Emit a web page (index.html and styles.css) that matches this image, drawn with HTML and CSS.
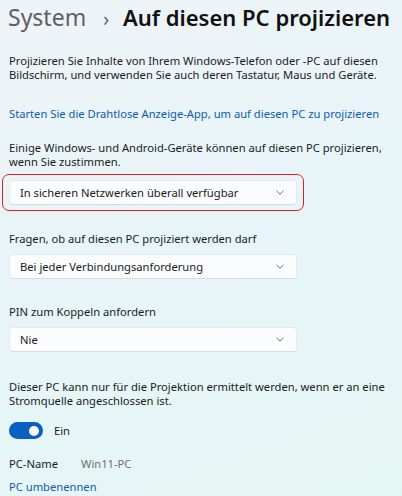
FILE: index.html
```html
<!DOCTYPE html>
<html lang="de">
<head>
    <meta charset="UTF-8">
    <meta name="viewport" content="width=device-width, initial-scale=1.0">
    <title>Auf diesen PC projizieren</title>
    <link rel="stylesheet" href="styles.css">
</head>
<body>
    <header class="page-title">
        <span class="crumb">System</span>
        <span class="sep">&#8250;</span>
        <span class="current">Auf diesen PC projizieren</span>
    </header>

    <main class="settings">
        <p class="intro">Projizieren Sie Inhalte von Ihrem Windows-Telefon oder -PC auf diesen Bildschirm, und verwenden Sie auch deren Tastatur, Maus und Geräte.</p>

        <a class="link launch" href="#">Starten Sie die Drahtlose Anzeige-App, um auf diesen PC zu projizieren</a>

        <p class="label first">Einige Windows- und Android-Geräte können auf diesen PC projizieren, wenn Sie zustimmen.</p>
        <div class="highlight">
            <div class="dropdown">
                <span>In sicheren Netzwerken überall verfügbar</span>
                <svg class="chevron" width="8" height="5" viewBox="0 0 8 5"><path d="M0.5 0.8 L4 4.2 L7.5 0.8" fill="none" stroke="#6b6f72" stroke-width="1"/></svg>
            </div>
        </div>

        <p class="label ask">Fragen, ob auf diesen PC projiziert werden darf</p>
        <div class="dropdown">
            <span>Bei jeder Verbindungsanforderung</span>
            <svg class="chevron" width="8" height="5" viewBox="0 0 8 5"><path d="M0.5 0.8 L4 4.2 L7.5 0.8" fill="none" stroke="#6b6f72" stroke-width="1"/></svg>
        </div>

        <p class="label pin">PIN zum Koppeln anfordern</p>
        <div class="dropdown">
            <span>Nie</span>
            <svg class="chevron" width="8" height="5" viewBox="0 0 8 5"><path d="M0.5 0.8 L4 4.2 L7.5 0.8" fill="none" stroke="#6b6f72" stroke-width="1"/></svg>
        </div>

        <p class="label power">Dieser PC kann nur für die Projektion ermittelt werden, wenn er an eine Stromquelle angeschlossen ist.</p>
        <div class="toggle-row">
            <span class="toggle on"><span class="knob"></span></span>
            <span class="toggle-text">Ein</span>
        </div>

        <div class="pc-name">
            <span class="key">PC-Name</span>
            <span class="value">Win11-PC</span>
        </div>
        <a class="link rename" href="#">PC umbenennen</a>
    </main>
</body>
</html>
```

FILE: styles.css
```css
body {
    font-family: "Noto Sans", "Liberation Sans", sans-serif;
    margin: 0;
    padding: 0;
    color: #1b1b1b;
    background: linear-gradient(160deg, #eef3f7 0%, #e7f5f8 50%, #e4f6f4 100%);
    height: 496px;
    overflow: hidden;
}

.page-title {
    display: flex;
    align-items: baseline;
    padding: 0 0 0 8px;
    height: 36px;
    font-size: 23px;
    line-height: 34px;
    white-space: nowrap;
}

.crumb {
    color: #5d6165;
}

.sep {
    color: #5d6165;
    font-size: 19px;
    margin: 0 14px 0 17px;
}

.current {
    font-size: 22px;
    font-weight: 600;
    color: #111;
}

.settings {
    padding: 0 4px 0 9px;
    font-size: 11.2px;
    line-height: 14px;
}

.settings p {
    margin: 0;
}

.intro {
    margin-top: 18px !important;
}

.link {
    display: block;
    color: #0f5bb0;
    text-decoration: none;
}

.launch {
    margin-top: 25px;
}

.label.first {
    margin-top: 20px;
}

.highlight {
    margin: 5px 0 0 -7px;
    width: 288px;
    padding: 5px 6px;
    border: 1px solid #e41f26;
    border-radius: 7px;
}

.dropdown {
    display: flex;
    align-items: center;
    justify-content: space-between;
    box-sizing: border-box;
    width: 288px;
    height: 25px;
    padding: 0 12px 0 10px;
    background-color: #fafcfd;
    border: 1px solid #e4e9ec;
    border-bottom-color: #d6dbde;
    border-radius: 4px;
}

.label.ask {
    margin-top: 21px;
    margin-bottom: 8px;
}

.label.pin {
    margin-top: 26px;
    margin-bottom: 8px;
}

.label.power {
    margin-top: 28px;
}

.toggle-row {
    display: flex;
    align-items: center;
    margin-top: 14px;
    height: 17px;
}

.toggle {
    display: flex;
    align-items: center;
    justify-content: flex-end;
    box-sizing: border-box;
    width: 34px;
    height: 17px;
    padding: 0 4px;
    border-radius: 9px;
    background-color: #0a5fc1;
}

.knob {
    width: 10px;
    height: 10px;
    border-radius: 50%;
    background-color: #fff;
}

.toggle-text {
    margin-left: 11px;
}

.pc-name {
    display: flex;
    margin-top: 18px;
}

.key {
    width: 72px;
}

.value {
    color: #707070;
}

.rename {
    margin-top: 9px;
}
```
